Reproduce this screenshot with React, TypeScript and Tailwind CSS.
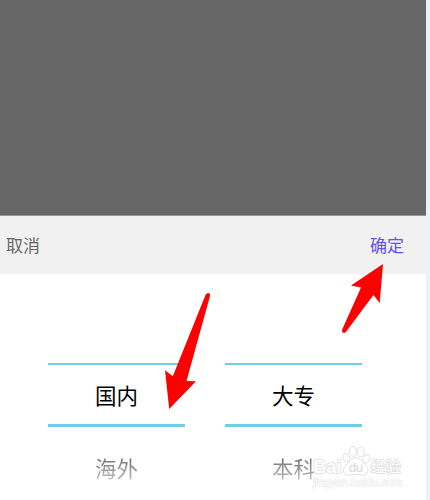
import React from 'react';

interface PickerColumnProps {
    selected: string;
    next: string;
}

const PickerColumn: React.FC<PickerColumnProps> = ({ selected, next }) => {
    return (
        <div className="w-[137px] text-center text-[21.5px] leading-[59px]">
            <div className="h-16 border-t-2 border-b-3 border-[#73cbea] text-black">
                {selected}
            </div>
            <div className="mt-[11px]">
                <span className="inline-block bg-linear-to-b from-[#686868] from-30% to-[#bcbcbc] to-70% bg-clip-text text-transparent">
                    {next}
                </span>
            </div>
        </div>
    );
};

const Arrows = () => (
    <svg className="absolute left-0 top-0 pointer-events-none" width="430" height="500" fill="#ff0000">
        <path d="M383 264 L379.7 303 L373.5 295 L346.2 331.6 Q344.8 333.6 342.8 332.6 Q341.4 331.6 342.2 329.4 L361 287.5 L351 285.5 Z" />
        <path d="M169.2 409 L165 370.3 L172.8 376.3 L205.6 294.8 Q206.6 292.8 208.6 293 Q210.6 293.6 210 296 L186.5 381 L196 381.2 Z" />
    </svg>
);

const Watermark = () => (
    <svg
        className="absolute left-[308px] top-[440px] pointer-events-none"
        width="100"
        height="52"
        fill="#ffffff"
        stroke="#e0e0e0"
        strokeWidth="1"
        strokeLinejoin="round"
        fontFamily="'Liberation Sans', 'Noto Sans CJK SC', sans-serif"
    >
        <g>
            <ellipse cx="38.2" cy="17.6" rx="3.2" ry="4.3" transform="rotate(-15 38.2 17.6)" />
            <ellipse cx="45" cy="11.4" rx="3.5" ry="4.9" />
            <ellipse cx="52.7" cy="11.7" rx="3.5" ry="4.9" transform="rotate(10 52.7 11.7)" />
            <ellipse cx="58.3" cy="19" rx="3.2" ry="4.3" transform="rotate(25 58.3 19)" />
            <path d="M48 17.8 C43 17.8 42 22 38 24.8 C33 30 36 35.3 41 35 Q48 33.8 54 35 C60 35.5 62 29.5 57.5 24.8 C54 22 53 17.8 48 17.8 Z" />
        </g>
        <text x="5.5" y="33" fontSize="18.5" fontWeight="bold" strokeWidth="1.6" paintOrder="stroke" textLength="28" lengthAdjust="spacingAndGlyphs">Bai</text>
        <text x="41" y="32" fontSize="12.5" fill="#dddddd" strokeWidth="0.4" textLength="14" lengthAdjust="spacingAndGlyphs">du</text>
        <text x="62.5" y="32" fontSize="15.2" strokeWidth="1.6" paintOrder="stroke">经验</text>
        <text x="5" y="45.5" fontSize="10.5" fill="#fcfcfc" stroke="#ebebeb" strokeWidth="1.2" paintOrder="stroke" textLength="89" lengthAdjust="spacingAndGlyphs">jingyan.baidu.com</text>
    </svg>
);

const App: React.FC = () => {
    return (
        <div className="relative h-[500px] w-[430px] overflow-hidden bg-[#ecf2fb] font-['Noto_Sans_CJK_SC',sans-serif]">
            <div className="flex h-full w-[426px] flex-col bg-white">
                <div className="h-[215px] shrink-0 bg-[#666666]"></div>
                <div className="flex h-[59px] shrink-0 items-center justify-between border-t border-[#999696] bg-[#f1f1f1] pl-[6px] pr-[22px] text-[17px]">
                    <button className="text-[#666666]">取消</button>
                    <button className="text-[#6250ef]">确定</button>
                </div>
                <div className="flex gap-10 pl-12 pt-[89px]">
                    <PickerColumn selected="国内" next="海外" />
                    <PickerColumn selected="大专" next="本科" />
                </div>
            </div>
            <Arrows />
            <Watermark />
        </div>
    );
};

export default App;
